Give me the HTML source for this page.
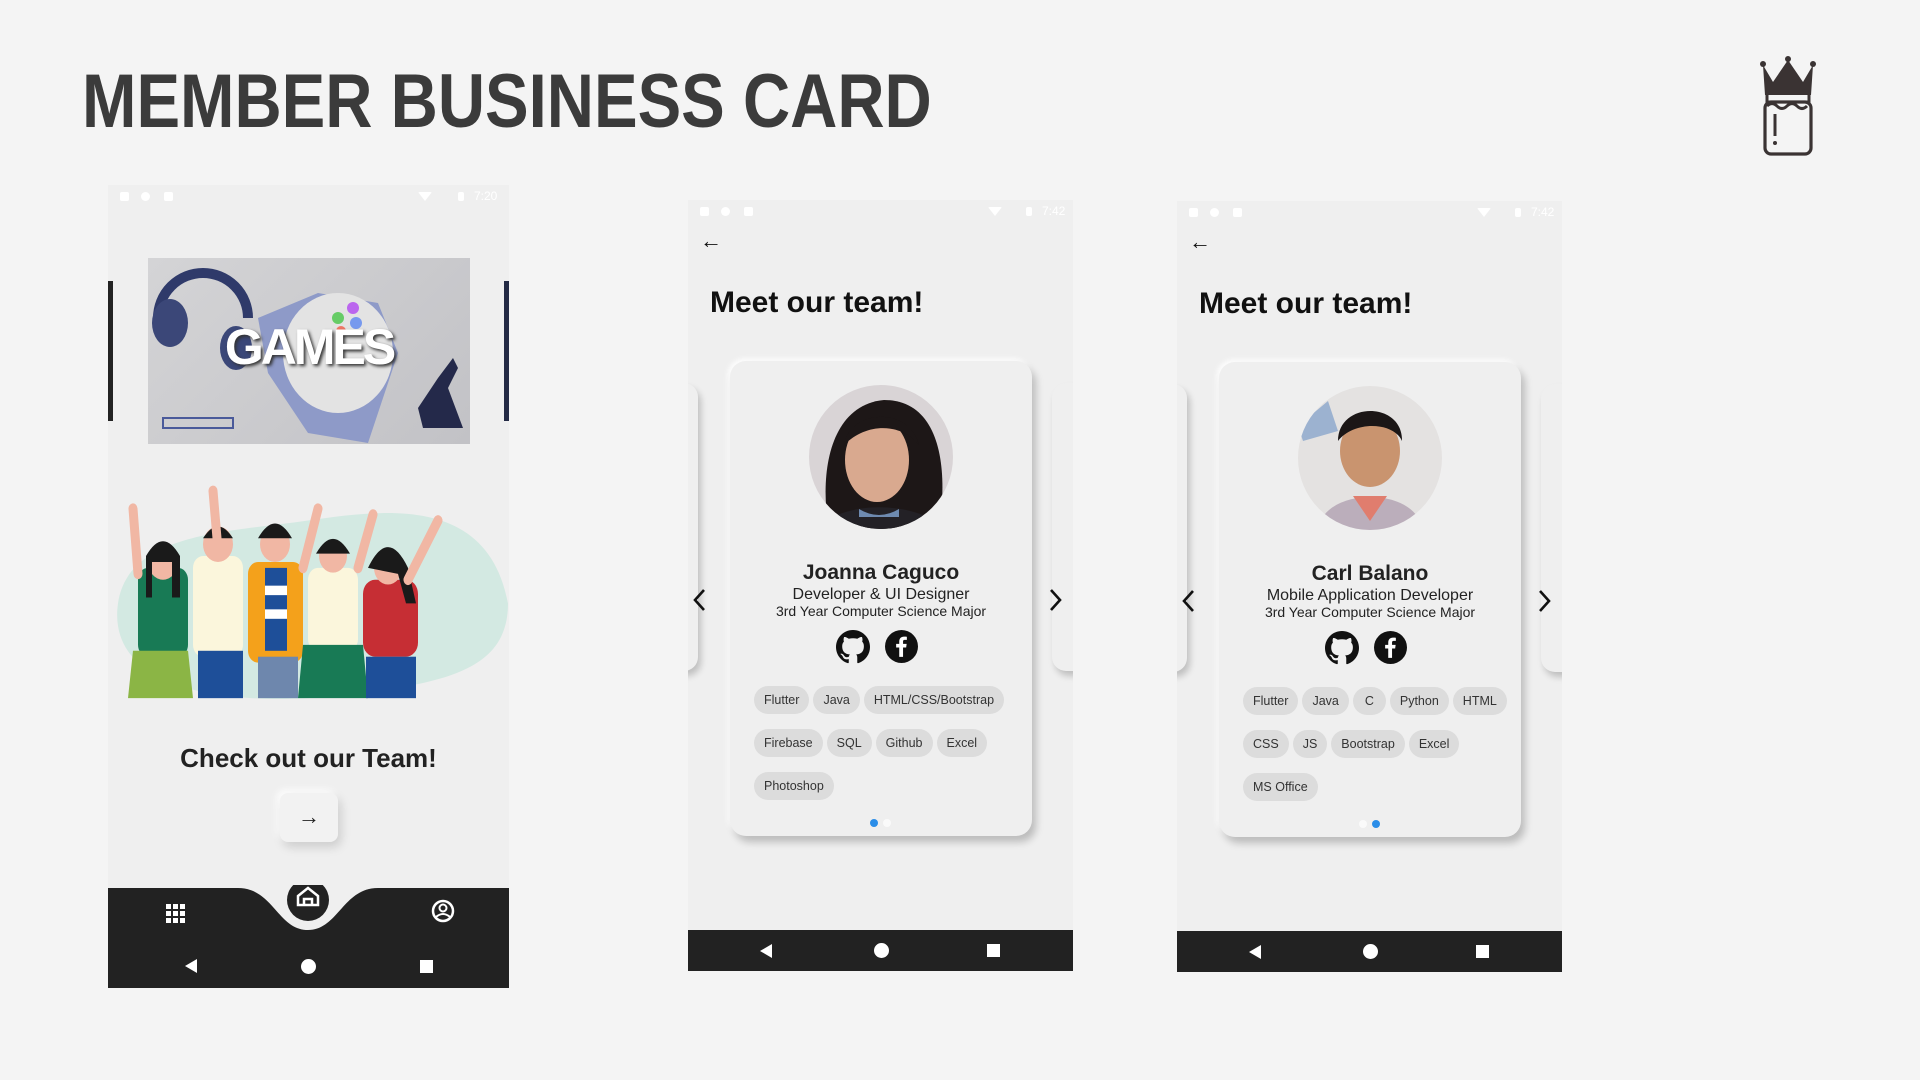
<!DOCTYPE html>
<html><head><meta charset="utf-8"><style>
*{margin:0;padding:0;box-sizing:border-box}
body{width:1920px;height:1080px;background:#f4f4f4;position:relative;overflow:hidden;font-family:"Liberation Sans",sans-serif}
.abs{position:absolute}
h1{position:absolute;left:82px;top:58px;font-size:76px;font-weight:bold;color:#3b3b3b;white-space:nowrap;transform:scaleX(0.86);transform-origin:left top}
.phone{position:absolute;background:#efefef;overflow:hidden}
.sb{position:absolute;left:0;top:0;right:0;height:22px}
.sb i{position:absolute;top:7px;width:9px;height:9px;background:#fff;border-radius:2px}
.nav{position:absolute;left:0;right:0;bottom:0;background:#222}
.tri{position:absolute;width:0;height:0;border-top:7px solid transparent;border-bottom:7px solid transparent;border-right:12px solid #fff}
.dot{position:absolute;width:15px;height:15px;border-radius:50%;background:#fff}
.sq{position:absolute;width:13px;height:13px;background:#fff}
.card{position:absolute;background:#efefef;border-radius:16px;box-shadow:4px 6px 8px rgba(0,0,0,.22),-2px -2px 6px #fff}
.side{position:absolute;background:#efefef;border-radius:14px;box-shadow:3px 5px 7px rgba(0,0,0,.2)}
.meet{position:absolute;font-size:30px;font-weight:bold;color:#111}
.name{position:absolute;left:0;right:0;text-align:center;font-size:21px;font-weight:bold;color:#222}
.role{position:absolute;left:0;right:0;text-align:center;font-size:16px;color:#222}
.maj{position:absolute;left:0;right:0;text-align:center;font-size:14px;color:#222}
.chips{position:absolute;left:24px;right:14px}
.row{display:flex;gap:4px;margin-bottom:15px;height:28px}
.chip{background:#dcdcdc;border-radius:14px;padding:0 10px;font-size:12.5px;line-height:28px;color:#333}
.chev{position:absolute}
</style></head><body>
<h1>MEMBER BUSINESS CARD</h1>

<svg class="abs" style="left:1755px;top:50px" width="66" height="106" viewBox="0 0 66 106">
<path d="M8 15 L18 32 L33 10 L48 32 L58 15 L56 45 L10 45 Z" fill="#3a3333"/>
<circle cx="8" cy="14" r="3" fill="#3a3333"/><circle cx="33" cy="9" r="3" fill="#3a3333"/><circle cx="58" cy="14" r="3" fill="#3a3333"/>
<rect x="12" y="40" width="42" height="12" fill="none" stroke="#3a3333" stroke-width="3"/>
<path d="M12 56 q5 -5 10 0 t10 0 t10 0 t10 0" fill="none" stroke="#3a3333" stroke-width="3"/>
<rect x="10" y="52" width="46" height="52" rx="6" fill="none" stroke="#3a3333" stroke-width="3.2"/>
<line x1="20" y1="64" x2="20" y2="86" stroke="#3a3333" stroke-width="3"/><circle cx="20" cy="93" r="2" fill="#3a3333"/>
</svg>

<div class="phone" style="left:108px;top:185px;width:401px;height:803px">
 <div class="sb"><i style="left:12px"></i><i style="left:33px;border-radius:50%"></i><i style="left:56px"></i><i style="left:310px;width:14px;clip-path:polygon(0 0,100% 0,50% 100%)"></i><i style="left:350px;width:6px"></i><span style="position:absolute;left:366px;top:4px;font-size:12px;color:#fff">7:20</span></div>
 <div class="abs" style="left:0;top:96px;width:5px;height:140px;background:#222"></div>
 <div class="abs" style="right:0;top:96px;width:5px;height:140px;background:#232a45"></div>
 <div class="abs" style="left:40px;top:73px;width:322px;height:186px;background:linear-gradient(135deg,#d4d4d6,#c2c2c6);overflow:hidden">
  <svg class="abs" style="left:0;top:0" width="322" height="186">
   <path d="M10 60 a45 45 0 0 1 90 0" fill="none" stroke="#2f3a6a" stroke-width="10"/>
   <ellipse cx="22" cy="65" rx="18" ry="24" fill="#3b4778"/><ellipse cx="88" cy="90" rx="16" ry="22" fill="#3b4778"/>
   <path d="M110 60 l60 -25 l60 10 l20 50 l-30 90 l-60 -10 l-40 -60 z" fill="#8e9ac8"/>
   <ellipse cx="190" cy="95" rx="55" ry="60" fill="#e3e3e3"/>
   <circle cx="190" cy="60" r="6" fill="#6c6"/><circle cx="205" cy="50" r="6" fill="#b6e"/><circle cx="208" cy="65" r="6" fill="#79e"/><circle cx="193" cy="73" r="5" fill="#e76"/>
   <path d="M270 150 l20 -30 l15 -20 l5 10 l-10 20 l15 40 h-40z" fill="#24294a"/>
   <rect x="15" y="160" width="70" height="10" fill="none" stroke="#4a5a9a" stroke-width="2"/>
  </svg>
  <div class="abs" style="left:0;right:0;top:60px;text-align:center;font-size:50px;font-weight:bold;color:#fff;letter-spacing:-3px;text-shadow:2px 2px 3px #333">GAMES</div>
 </div>
 <svg class="abs" style="left:0;top:300px" width="401" height="225" viewBox="0 0 401 190" preserveAspectRatio="none">
  <path d="M10 100 C20 40 120 40 200 30 C280 20 380 10 400 100 C400 160 330 170 200 180 C80 185 0 160 10 100Z" fill="#d3e9e2"/>
  <rect x="30" y="70" width="50" height="75" rx="10" fill="#187a55"/><path d="M25 140 h55 l5 40 h-65z" fill="#8bb545"/><circle cx="55" cy="65" r="15" fill="#f1b7a4"/><path d="M38 60 q17 -25 34 0 v35 h-8 v-30 h-20 v30 h-6z" fill="#1a1a1a"/>
  <rect x="85" y="60" width="50" height="85" rx="10" fill="#fbf6dc"/><rect x="90" y="140" width="45" height="40" fill="#1e4f99"/><circle cx="110" cy="50" r="15" fill="#f1b7a4"/><path d="M95 45 q15 -20 30 0z" fill="#1a1a1a"/>
  <rect x="140" y="65" width="55" height="85" rx="10" fill="#f4a11b"/><rect x="157" y="70" width="22" height="70" fill="#1e4f99"/><rect x="157" y="85" width="22" height="8" fill="#fff"/><rect x="157" y="105" width="22" height="8" fill="#fff"/><rect x="150" y="145" width="40" height="35" fill="#6e87ad"/><circle cx="167" cy="50" r="15" fill="#f1b7a4"/><path d="M150 45 q17 -25 34 0z" fill="#1a1a1a"/>
  <rect x="200" y="70" width="50" height="70" rx="10" fill="#fbf6dc"/><path d="M195 135 h60 l5 45 h-70z" fill="#187a55"/><circle cx="225" cy="60" r="14" fill="#f1b7a4"/><path d="M208 58 q17 -25 34 0z" fill="#1a1a1a"/>
  <rect x="255" y="80" width="55" height="65" rx="12" fill="#c62e34"/><rect x="258" y="145" width="50" height="35" fill="#1e4f99"/><circle cx="280" cy="70" r="14" fill="#f1b7a4"/><path d="M260 70 q20 -35 40 0 l8 30 h-10 l-8 -25z" fill="#1a1a1a"/>
  <path d="M30 75 l-5 -55 M110 55 l-5 -50 M195 70 l15 -50 M250 70 l15 -45 M300 80 l30 -50" stroke="#f1b7a4" stroke-width="9" stroke-linecap="round"/>
 </svg>
 <div class="abs" style="left:0;right:0;top:558px;text-align:center;font-size:26px;font-weight:bold;color:#222">Check out our Team!</div>
 <div class="abs" style="left:172px;top:608px;width:58px;height:49px;border-radius:8px;background:#f2f2f2;box-shadow:3px 5px 10px rgba(0,0,0,.15),-3px -3px 8px #fff;text-align:center;font-size:22px;line-height:48px;color:#222">→</div>
 <svg class="abs" style="left:0;top:700px" width="401" height="103" viewBox="0 0 401 103">
  <path d="M0 3 H130 C165 3 170 45 200 45 C230 45 235 3 270 3 H401 V103 H0Z" fill="#222"/>
  <circle cx="200" cy="15" r="21" fill="#222"/>
  <path d="M190 20 v-9 l10 -8 l10 8 v9 h-20z M196 20 v-6 h8 v6" fill="none" stroke="#fff" stroke-width="2.5"/>
  <g fill="#fff"><rect x="58" y="19" width="5" height="5"/><rect x="65" y="19" width="5" height="5"/><rect x="72" y="19" width="5" height="5"/><rect x="58" y="26" width="5" height="5"/><rect x="65" y="26" width="5" height="5"/><rect x="72" y="26" width="5" height="5"/><rect x="58" y="33" width="5" height="5"/><rect x="65" y="33" width="5" height="5"/><rect x="72" y="33" width="5" height="5"/></g>
  <circle cx="335" cy="26" r="10" fill="none" stroke="#fff" stroke-width="2.5"/><circle cx="335" cy="23" r="3.5" fill="none" stroke="#fff" stroke-width="2"/><path d="M328 32 q7 -6 14 0" stroke="#fff" stroke-width="2" fill="none"/>
 </svg>
 <div class="tri" style="left:77px;top:774px"></div><div class="dot" style="left:193px;top:774px"></div><div class="sq" style="left:312px;top:775px"></div>
</div>

<!-- Phone 2 -->
<div class="phone" style="left:688px;top:200px;width:385px;height:771px">
 <div class="sb"><i style="left:12px"></i><i style="left:33px;border-radius:50%"></i><i style="left:56px"></i><i style="left:300px;width:14px;clip-path:polygon(0 0,100% 0,50% 100%)"></i><i style="left:338px;width:6px"></i><span style="position:absolute;left:354px;top:4px;font-size:12px;color:#fff">7:42</span></div>
 <div class="abs" style="left:12px;top:28px;font-size:22px;color:#111">←</div>
 <div class="meet" style="left:22px;top:86px">Meet our team!</div>
 <div class="side" style="left:-30px;top:183px;width:40px;height:288px"></div>
 <div class="side" style="left:364px;top:183px;width:40px;height:288px"></div>
 <svg class="chev" style="left:4px;top:388px" width="14" height="24"><path d="M12 2 L3 12 L12 22" fill="none" stroke="#111" stroke-width="2.6"/></svg>
 <svg class="chev" style="left:361px;top:388px" width="14" height="24"><path d="M2 2 L11 12 L2 22" fill="none" stroke="#111" stroke-width="2.6"/></svg>
 <div class="card" style="left:42px;top:161px;width:302px;height:475px">
  <svg class="abs" style="left:79px;top:24px" width="144" height="144"><defs><clipPath id="c1"><circle cx="72" cy="72" r="72"/></clipPath></defs><g clip-path="url(#c1)"><rect width="144" height="144" fill="#d9d4d6"/><path d="M20 144 C10 90 20 20 75 15 C130 15 140 80 130 144Z" fill="#1d1717"/><ellipse cx="68" cy="75" rx="32" ry="42" fill="#d9a98f"/><path d="M35 60 C40 25 100 20 110 60 C95 40 60 35 35 60Z" fill="#1d1717"/><path d="M10 144 C30 115 110 115 134 144Z" fill="#232126"/><path d="M50 124 q20 12 40 0 v8 h-40z" fill="#6e8ab0"/></g></svg>
  <div class="name" style="top:200px">Joanna Caguco</div>
  <div class="role" style="top:225px">Developer &amp; UI Designer</div>
  <div class="maj" style="top:242px">3rd Year Computer Science Major</div>
  <svg class="abs" style="left:106px;top:269px" width="34" height="34" viewBox="0 0 16 16"><path fill="#111" d="M8 0C3.58 0 0 3.58 0 8c0 3.54 2.29 6.53 5.47 7.59.4.07.55-.17.55-.38 0-.19-.01-.82-.01-1.49-2.01.37-2.53-.49-2.690-.94-.09-.23-.48-.94-.82-1.13-.28-.15-.68-.52-.01-.53.63-.01 1.08.58 1.23.82.72 1.21 1.87.87 2.33.66.07-.52.28-.87.51-1.07-1.78-.2-3.64-.89-3.64-3.95 0-.87.31-1.59.82-2.15-.08-.2-.36-1.02.08-2.12 0 0 .67-.21 2.2.82.64-.18 1.32-.27 2-.27.68 0 1.36.09 2 .27 1.53-1.04 2.2-.82 2.2-.82.44 1.1.16 1.92.08 2.12.51.56.82 1.27.82 2.15 0 3.07-1.87 3.75-3.65 3.95.29.25.54.73.54 1.48 0 1.07-.01 1.93-.01 2.2 0 .21.15.46.55.38A8.013 8.013 0 0016 8c0-4.420-3.58-8-8-8z"/></svg>
  <svg class="abs" style="left:155px;top:269px" width="33" height="33" viewBox="0 0 32 32"><circle cx="16" cy="16" r="16" fill="#111"/><path d="M17.5 26V17h3l.5-3.5h-3.5v-2.2c0-1 .3-1.7 1.8-1.7h1.9V6.5c-.3 0-1.5-.1-2.8-.1-2.8 0-4.6 1.7-4.6 4.8v2.3h-3V17h3v9z" fill="#fff"/></svg>
  <div class="chips" style="top:325px">
   <div class="row"><span class="chip">Flutter</span><span class="chip">Java</span><span class="chip">HTML/CSS/Bootstrap</span></div>
   <div class="row"><span class="chip">Firebase</span><span class="chip">SQL</span><span class="chip">Github</span><span class="chip">Excel</span></div>
   <div class="row"><span class="chip">Photoshop</span></div>
  </div>
  <div class="abs" style="left:140px;top:458px;width:8px;height:8px;border-radius:50%;background:#2a8de8"></div>
  <div class="abs" style="left:153px;top:458px;width:8px;height:8px;border-radius:50%;background:#fafafa"></div>
 </div>
 <div class="nav" style="height:41px"><div class="tri" style="left:72px;top:14px"></div><div class="dot" style="left:186px;top:13px"></div><div class="sq" style="left:299px;top:14px"></div></div>
</div>

<!-- Phone 3 -->
<div class="phone" style="left:1177px;top:201px;width:385px;height:771px">
 <div class="sb"><i style="left:12px"></i><i style="left:33px;border-radius:50%"></i><i style="left:56px"></i><i style="left:300px;width:14px;clip-path:polygon(0 0,100% 0,50% 100%)"></i><i style="left:338px;width:6px"></i><span style="position:absolute;left:354px;top:4px;font-size:12px;color:#fff">7:42</span></div>
 <div class="abs" style="left:12px;top:28px;font-size:22px;color:#111">←</div>
 <div class="meet" style="left:22px;top:86px">Meet our team!</div>
 <div class="side" style="left:-30px;top:183px;width:40px;height:288px"></div>
 <div class="side" style="left:364px;top:183px;width:40px;height:288px"></div>
 <svg class="chev" style="left:4px;top:388px" width="14" height="24"><path d="M12 2 L3 12 L12 22" fill="none" stroke="#111" stroke-width="2.6"/></svg>
 <svg class="chev" style="left:361px;top:388px" width="14" height="24"><path d="M2 2 L11 12 L2 22" fill="none" stroke="#111" stroke-width="2.6"/></svg>
 <div class="card" style="left:42px;top:161px;width:302px;height:475px">
  <svg class="abs" style="left:79px;top:24px" width="144" height="144"><defs><clipPath id="c2"><circle cx="72" cy="72" r="72"/></clipPath></defs><g clip-path="url(#c2)"><rect width="144" height="144" fill="#e4e2e1"/><path d="M0 40 l30 -25 l10 30 l-35 10z" fill="#9cb2d0"/><ellipse cx="72" cy="65" rx="30" ry="36" fill="#c9946f"/><path d="M40 55 C40 15 105 15 104 55 C95 35 55 35 40 55Z" fill="#1b1616"/><path d="M20 144 C25 100 120 100 124 144Z" fill="#bbaebb"/><path d="M55 110 l17 25 l17 -25z" fill="#e07d6e"/></g></svg>
  <div class="name" style="top:200px">Carl Balano</div>
  <div class="role" style="top:225px">Mobile Application Developer</div>
  <div class="maj" style="top:242px">3rd Year Computer Science Major</div>
  <svg class="abs" style="left:106px;top:269px" width="34" height="34" viewBox="0 0 16 16"><path fill="#111" d="M8 0C3.58 0 0 3.58 0 8c0 3.54 2.29 6.53 5.47 7.59.4.07.55-.17.55-.38 0-.19-.01-.82-.01-1.49-2.01.37-2.53-.49-2.69-.94-.09-.23-.48-.94-.82-1.13-.28-.15-.68-.52-.01-.53.63-.01 1.08.58 1.23.82.72 1.21 1.87.87 2.33.66.07-.52.28-.87.51-1.07-1.78-.2-3.64-.89-3.64-3.95 0-.87.31-1.59.82-2.15-.08-.2-.36-1.02.08-2.12 0 0 .67-.21 2.2.82.64-.18 1.32-.27 2-.27.68 0 1.36.09 2 .27 1.53-1.04 2.2-.82 2.2-.82.44 1.1.16 1.92.08 2.12.51.56.82 1.27.82 2.15 0 3.07-1.87 3.75-3.65 3.95.29.25.54.73.54 1.48 0 1.07-.01 1.93-.01 2.2 0 .21.15.46.55.38A8.013 8.013 0 0016 8c0-4.42-3.58-8-8-8z"/></svg>
  <svg class="abs" style="left:155px;top:269px" width="33" height="33" viewBox="0 0 32 32"><circle cx="16" cy="16" r="16" fill="#111"/><path d="M17.5 26V17h3l.5-3.5h-3.5v-2.2c0-1 .3-1.7 1.8-1.7h1.9V6.5c-.3 0-1.5-.1-2.8-.1-2.8 0-4.6 1.7-4.6 4.8v2.3h-3V17h3v9z" fill="#fff"/></svg>
  <div class="chips" style="top:325px">
   <div class="row"><span class="chip">Flutter</span><span class="chip">Java</span><span class="chip" style="padding:0 12px">C</span><span class="chip">Python</span><span class="chip">HTML</span></div>
   <div class="row"><span class="chip">CSS</span><span class="chip">JS</span><span class="chip">Bootstrap</span><span class="chip">Excel</span></div>
   <div class="row"><span class="chip">MS Office</span></div>
  </div>
  <div class="abs" style="left:140px;top:458px;width:8px;height:8px;border-radius:50%;background:#fafafa"></div>
  <div class="abs" style="left:153px;top:458px;width:8px;height:8px;border-radius:50%;background:#2a8de8"></div>
 </div>
 <div class="nav" style="height:41px"><div class="tri" style="left:72px;top:14px"></div><div class="dot" style="left:186px;top:13px"></div><div class="sq" style="left:299px;top:14px"></div></div>
</div>
</body></html>
